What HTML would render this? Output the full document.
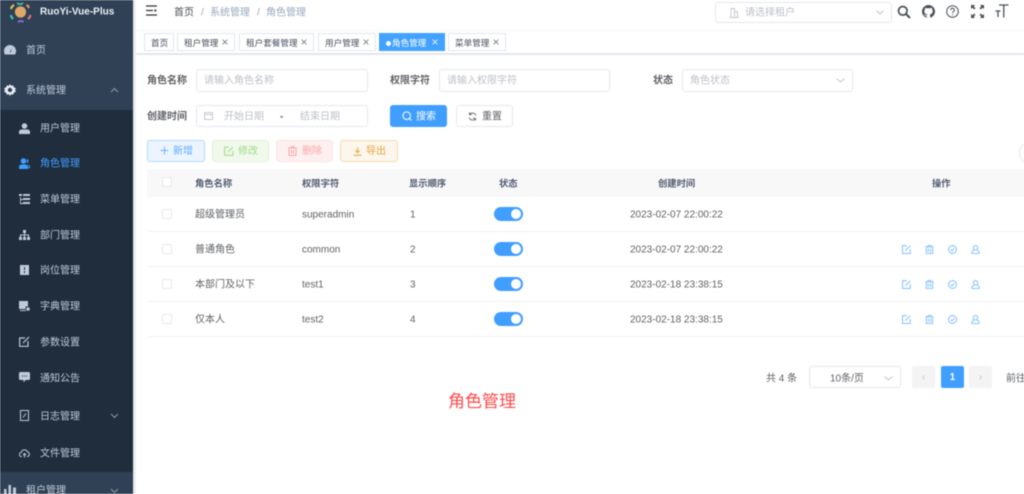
<!DOCTYPE html>
<html lang="zh"><head><meta charset="utf-8"><title>角色管理</title>
<style>
html,body{margin:0;padding:0;width:1024px;height:494px;overflow:hidden;background:#fff}
#r{position:relative;width:1024px;height:494px;overflow:hidden;font-family:"Liberation Sans","Noto Sans CJK SC",sans-serif;font-size:10px;color:#606266;filter:blur(.45px)}
.a,.t,.b,svg{position:absolute}
.t{white-space:nowrap;line-height:14px;transform:translateY(-5.5px)}
.b{box-sizing:border-box}
.side{color:#bfcbd9}
.in{background:#fff;border:1px solid #e4e7ed;border-radius:3px}
.ph{color:#bcc0c8}
.lb{font-weight:700;color:#606266}
.tag{position:absolute;top:33px;height:18px;box-sizing:border-box;border:1px solid #e2e6ee;background:#fff;color:#495060;font-size:8.6px;line-height:18px;white-space:nowrap;padding-left:6px}
.x{position:absolute;right:6px;top:5px;width:6px;height:6px}
.btn{position:absolute;top:140px;height:22px;box-sizing:border-box;border-radius:3px;border:1px solid;text-align:left;line-height:22px;font-size:10px;white-space:nowrap}
.th{color:#515a6e;font-weight:700;font-size:9.3px}
.cb{position:absolute;left:162px;width:10px;height:10px;box-sizing:border-box;border:1px solid #e6e8ec;border-radius:2px;background:#fff}
.sw{position:absolute;left:494px;width:29px;height:14px;background:#409eff;border-radius:7px}
.sw:after{content:"";position:absolute;right:2px;top:2px;width:10px;height:10px;border-radius:50%;background:#fff}
.ln{position:absolute;left:147px;right:0;height:1px;background:#eff2f6}
.pg{position:absolute;top:366px;height:22px;box-sizing:border-box;border-radius:2px;background:#f4f4f5;text-align:center;line-height:24px;color:#c0c4cc;font-size:10px}
svg.i{fill:none;stroke:#8cc5ff;stroke-width:1.2}
svg.s{fill:#bfcbd9}
svg.x path{stroke:#606a75;stroke-width:.9;fill:none}
</style></head><body><div id="r">

<!-- sidebar -->
<div class="b" style="left:0;top:0;width:133px;height:494px;background:#1f2d3d"></div>
<div class="b" style="left:0;top:0;width:133px;height:110px;background:#304156"></div>
<div class="b" style="left:0;top:472px;width:133px;height:22px;background:#304156"></div>
<div class="b" style="left:133px;top:0;width:3px;height:494px;background:linear-gradient(90deg,#dfe2e7,#f6f7f8)"></div>

<svg style="left:8px;top:0" width="26" height="24" viewBox="0 0 26 24">
<circle cx="12.5" cy="12" r="5.6" fill="#e0a868"/>
<path d="M9 3l3 1.500 3-1.500" stroke="#3fc5b0" stroke-width="1.8" fill="none"/>
<path d="M18.500 5q2 1 2.500 3" stroke="#e79a6b" stroke-width="2" fill="none"/>
<path d="M3 9q.5-2.500 3-4" stroke="#e8d24a" stroke-width="2" fill="none"/>
<path d="M3 15q0 2 2 4" stroke="#3fd0c0" stroke-width="2" fill="none"/>
<path d="M20 19q2-1.500 2.500-4" stroke="#e07a7a" stroke-width="2" fill="none"/>
<path d="M10 22q3-2 5.500 0" stroke="#8a68d8" stroke-width="2" fill="none"/>
</svg>
<div class="t" style="left:40px;top:10.500px;font-size:10px;font-weight:700;color:#eef1f5">RuoYi-Vue-Plus</div>

<svg class="s" style="left:4px;top:45px" width="12" height="10" viewBox="0 0 12 10"><path d="M6 0a6 6 0 0 0-6 6c0 1.500.3 2.500 1 3.500h10c.7-1 1-2 1-3.500a6 6 0 0 0-6-6zM6 7.500 7.500 3 7 7.500z"/></svg>
<div class="t side" style="left:26px;top:50px">首页</div>

<svg class="a" style="left:4px;top:84px" width="12" height="12" viewBox="0 0 12 12"><path d="M6 0l1 1.700 2-.3.9 1.800L12 4.500 11 6l1 1.500-2.100 1.300-.9 1.800-2-.3L6 12l-1-1.700-2 .3-.9-1.800L0 7.500 1 6 0 4.500l2.100-1.300.9-1.800 2 .3z" fill="#e9edf2"/><circle cx="6" cy="6" r="2.200" fill="#304156"/></svg>
<div class="t side" style="left:26px;top:90px">系统管理</div>
<svg style="left:110px;top:87px" width="9" height="6" viewBox="0 0 9 6"><path d="M1 5l3.500-3.500L8 5" stroke="#8f9cab" fill="none"/></svg>

<svg class="s" style="left:19px;top:123px" width="11" height="11" viewBox="0 0 11 11"><circle cx="5.500" cy="3" r="2.800"/><path d="M0 11V9q0-2.500 3-2.500h5q3 0 3 2.500v2z"/></svg>
<div class="t side" style="left:40px;top:128px">用户管理</div>

<svg style="left:19px;top:158px;fill:#409eff" width="11" height="11" viewBox="0 0 11 11"><circle cx="4.500" cy="3" r="2.800"/><path d="M0 11V9q0-2.500 3-2.500h3q3 0 3 2.500v2zM8 .8a2.500 2.500 0 0 1 0 4.600zM9 6.500q2 .5 2 2.500v1.500H9.800V9q0-1.500-.8-2.500z"/></svg>
<div class="t" style="left:40px;top:163px;color:#409eff">角色管理</div>

<svg class="s" style="left:19px;top:194px" width="11" height="10" viewBox="0 0 11 10"><path d="M0 0h3v2H0zM4 0h7v2H4zM4 4h7v2H4zM4 8h7v2H4zM0 3h1v7h3v-1H1.800V6H4V5H1.800V3z"/></svg>
<div class="t side" style="left:40px;top:199px">菜单管理</div>

<svg class="s" style="left:19px;top:230px" width="11" height="10" viewBox="0 0 11 10"><path d="M4 0h3v3H6v1.500h4V7h1v3H8V7h1V5.500H6V7h1v3H4V7h1V5.500H2V7h1v3H0V7h1V4.500h4V3H4z"/></svg>
<div class="t side" style="left:40px;top:235px">部门管理</div>

<svg class="s" style="left:20px;top:265px" width="9" height="10" viewBox="0 0 9 10"><path d="M0 0h9v10H0z"/><path d="M4 2h1v3H4zM4 6h1v2H4z" fill="#1f2d3d"/></svg>
<div class="t side" style="left:40px;top:270px">岗位管理</div>

<svg class="s" style="left:19px;top:301px" width="11" height="10" viewBox="0 0 11 10"><path d="M0 0h9v5.500H6.500V8H0zM1 9h6v1H1z"/><circle cx="9" cy="8" r="1.800"/></svg>
<div class="t side" style="left:40px;top:306px">字典管理</div>

<svg style="left:19px;top:336px" width="11" height="11" viewBox="0 0 11 11"><path d="M6 2H.7v8.300H9V5M4 7l6-6" stroke="#bfcbd9" stroke-width="1.200" fill="none"/></svg>
<div class="t side" style="left:40px;top:342px">参数设置</div>

<svg class="s" style="left:19px;top:372px" width="11" height="11" viewBox="0 0 11 11"><path d="M1.500 0h8Q11 0 11 1.500v5Q11 8 9.500 8H6.500L4.500 10.500V8h-3Q0 8 0 6.500v-5Q0 0 1.500 0z"/><path d="M3 3.500h1v1H3zM5 3.500h1v1H5zM7 3.500h1v1H7z" fill="#1f2d3d"/></svg>
<div class="t side" style="left:40px;top:378px">通知公告</div>

<svg style="left:20px;top:410px" width="9" height="11" viewBox="0 0 9 11"><path d="M.5.500h8v10h-8zM3 7.500l3-4" stroke="#bfcbd9" fill="none"/></svg>
<div class="t side" style="left:40px;top:415.500px">日志管理</div>
<svg style="left:110px;top:413px" width="9" height="6" viewBox="0 0 9 6"><path d="M1 1l3.500 3.500L8 1" stroke="#8f9cab" fill="none"/></svg>

<svg style="left:19px;top:449px" width="11" height="9" viewBox="0 0 11 9"><path d="M3 7.500H2.500a2 2 0 0 1-.3-4A3.300 3.300 0 0 1 8.500 3a2.300 2.300 0 0 1 0 4.500H8M4 6l1.500-1.500L7 6M5.500 5v3.500" stroke="#bfcbd9" fill="none"/></svg>
<div class="t side" style="left:40px;top:453px">文件管理</div>

<svg class="s" style="left:4px;top:485px" width="12" height="9" viewBox="0 0 12 9"><path d="M0 4h2.500v5H0zM4.500 0H7v9H4.500zM9 2.500h3V9H9z"/></svg>
<div class="t side" style="left:26px;top:490px">租户管理</div>
<svg style="left:110px;top:488px" width="9" height="6" viewBox="0 0 9 6"><path d="M1 1l3.500 3.500L8 1" stroke="#8f9cab" fill="none"/></svg>

<!-- navbar -->
<svg style="left:146px;top:5px" width="12" height="12" viewBox="0 0 12 12"><path d="M0 1h11M0 5.500h7M0 10h11" stroke="#303133" stroke-width="1.300" fill="none"/><path d="M8.500 4l2.500 1.500L8.500 7z" fill="#303133"/></svg>
<div class="t" style="left:174px;top:12px;color:#4a4f57">首页</div>
<div class="t" style="left:201px;top:12px;color:#9aa0a8">/</div>
<div class="t" style="left:210px;top:12px;color:#97a8be">系统管理</div>
<div class="t" style="left:257px;top:12px;color:#9aa0a8">/</div>
<div class="t" style="left:266px;top:12px;color:#97a8be">角色管理</div>

<div class="b in" style="left:715px;top:2px;width:177px;height:21px"></div>
<svg style="left:729px;top:7px" width="10" height="11" viewBox="0 0 10 11"><path d="M2 10.500V1.500h3.500v9M5.500 4.500H8.500v6M.5 10.500h9" stroke="#c4c8ce" fill="none"/></svg>
<div class="t ph" style="left:745px;top:12px">请选择租户</div>
<svg style="left:876px;top:10px" width="8" height="5" viewBox="0 0 8 5"><path d="M.5.500 4 4 7.500.5" stroke="#c0c4cc" fill="none"/></svg>

<svg style="left:897px;top:5px" width="14" height="14" viewBox="0 0 14 14"><circle cx="5.800" cy="5.800" r="4.300" stroke="#4b5058" stroke-width="1.700" fill="none"/><path d="M9 9l4 4" stroke="#4b5058" stroke-width="2" fill="none"/></svg>
<svg style="left:922px;top:5px" width="13" height="13" viewBox="0 0 16 16"><path fill="#4b5058" d="M8 0C3.580 0 0 3.580 0 8c0 3.540 2.290 6.530 5.470 7.590.4.070.55-.17.550-.38v-1.340c-2.230.48-2.690-1.070-2.690-1.070-.36-.92-.89-1.170-.89-1.170-.73-.5.050-.49.050-.49.800.06 1.230.83 1.230.83.710 1.220 1.870.870 2.330.660.070-.520.280-.870.510-1.070-1.780-.2-3.640-.89-3.640-3.950 0-.870.310-1.590.820-2.150-.08-.2-.360-1.020.080-2.120 0 0 .670-.210 2.200.820a7.600 7.600 0 0 1 4 0c1.530-1.040 2.200-.820 2.200-.820.440 1.100.160 1.920.080 2.120.510.560.820 1.270.820 2.150 0 3.070-1.870 3.750-3.650 3.950.290.250.540.730.540 1.480v2.200c0 .210.150.460.550.380A8 8 0 0 0 16 8c0-4.420-3.580-8-8-8z"/></svg>
<svg style="left:946px;top:5px" width="13" height="13" viewBox="0 0 13 13"><circle cx="6.500" cy="6.500" r="5.800" stroke="#4b5058" fill="none"/><path d="M4.700 5a1.800 1.800 0 1 1 2.600 1.700c-.6.300-.8.600-.8 1.300M6.500 9.200v1" stroke="#4b5058" fill="none"/></svg>
<svg style="left:971px;top:5px" width="13" height="13" viewBox="0 0 13 13"><path d="M0 0h4L2.800 1.500 4.500 3.200 3.200 4.500 1.500 2.800 0 4zM13 0v4l-1.500-1.200-1.700 1.700-1.300-1.300 1.700-1.700L9 0zM0 13V9l1.500 1.200 1.700-1.700 1.300 1.300-1.700 1.700L4 13zM13 13H9l1.200-1.500-1.700-1.700 1.300-1.300 1.700 1.700L13 9z" fill="#4b5058"/></svg>
<svg style="left:995px;top:4px" width="14" height="14" viewBox="0 0 14 14"><path d="M4 1h9.500M8.800 1v12.500M.5 7h5M3 7v6" stroke="#4b5058" stroke-width="1.300" fill="none"/></svg>

<!-- tags bar -->
<div class="b" style="left:136px;top:30px;right:0;height:1px;background:#f4f5f7"></div>
<div class="b" style="left:136px;top:53px;right:0;height:2px;background:#e3e6eb"></div>
<div class="tag" style="left:144px;width:30px">首页</div>
<div class="tag" style="left:177px;width:58px">租户管理<svg class="x" viewBox="0 0 7 7"><path d="M.7.700l5.600 5.600M6.300.700.7 6.300"/></svg></div>
<div class="tag" style="left:239px;width:75px">租户套餐管理<svg class="x" viewBox="0 0 7 7"><path d="M.7.700l5.600 5.600M6.300.700.7 6.300"/></svg></div>
<div class="tag" style="left:318px;width:58px">用户管理<svg class="x" viewBox="0 0 7 7"><path d="M.7.700l5.600 5.600M6.300.700.7 6.300"/></svg></div>
<div class="tag" style="left:379px;width:66px;background:#42a2ff;border-color:#42a2ff;color:#fff;padding-left:6px"><span style="display:inline-block;width:5px;height:5px;border-radius:50%;background:#fff;margin-right:1px;vertical-align:0"></span>角色管理<svg class="x" viewBox="0 0 7 7"><path style="stroke:#fff" d="M.7.700l5.600 5.600M6.300.700.7 6.300"/></svg></div>
<div class="tag" style="left:448px;width:58px">菜单管理<svg class="x" viewBox="0 0 7 7"><path d="M.7.700l5.600 5.600M6.300.700.7 6.300"/></svg></div>

<!-- form -->
<div class="t lb" style="left:147px;top:80px">角色名称</div>
<div class="b in" style="left:196px;top:69px;width:172px;height:23px"></div>
<div class="t ph" style="left:204px;top:80px">请输入角色名称</div>
<div class="t lb" style="left:390px;top:80px">权限字符</div>
<div class="b in" style="left:439px;top:69px;width:171px;height:23px"></div>
<div class="t ph" style="left:447px;top:80px">请输入权限字符</div>
<div class="t lb" style="left:653px;top:80px">状态</div>
<div class="b in" style="left:682px;top:69px;width:171px;height:23px"></div>
<div class="t ph" style="left:690px;top:80px">角色状态</div>
<svg style="left:836px;top:78px" width="9" height="5" viewBox="0 0 9 5"><path d="M.5.500 4.500 4 8.500.5" stroke="#c0c4cc" fill="none"/></svg>

<div class="t lb" style="left:147px;top:116px">创建时间</div>
<div class="b in" style="left:196px;top:105px;width:172px;height:22px"></div>
<svg style="left:204px;top:111px" width="9" height="9" viewBox="0 0 9 9"><path d="M.5 1.500h8v7h-8zM.5 3.500h8" stroke="#c4c8ce" fill="none"/></svg>
<div class="t ph" style="left:224px;top:116px">开始日期</div>
<div class="t" style="left:280px;top:116px;color:#606266;font-weight:700">-</div>
<div class="t ph" style="left:300px;top:116px">结束日期</div>

<div class="b" style="left:390px;top:105px;width:57px;height:22px;background:#409eff;border-radius:3px"></div>
<svg style="left:402px;top:111px" width="10" height="10" viewBox="0 0 10 10"><circle cx="4.700" cy="4.700" r="3.800" stroke="#fff" fill="none"/><path d="M7.500 7.500 9.500 9.500" stroke="#fff" fill="none"/></svg>
<div class="t" style="left:416px;top:116px;color:#fff">搜索</div>
<div class="b in" style="left:456px;top:105px;width:57px;height:22px"></div>
<svg style="left:468px;top:112px" width="9" height="9" viewBox="0 0 9 9"><path d="M8 3.500A3.700 3.700 0 0 0 1.500 2.500M1 5.500A3.700 3.700 0 0 0 7.500 6.500M1.500.5v2.200h2.200M7.500 8.500V6.300H5.300" stroke="#606266" stroke-width=".9" fill="none"/></svg>
<div class="t" style="left:482px;top:116px;color:#606266">重置</div>

<div class="btn" style="left:147px;width:58px;background:#ecf5ff;border-color:#b3d8ff;color:#5cabff;padding-left:25px">新增</div>
<svg style="left:160px;top:146px" width="9" height="9" viewBox="0 0 9 9"><path d="M4.500.5v8M.5 4.500h8" stroke="#6db3ff" fill="none"/></svg>
<div class="btn" style="left:212px;width:57px;background:#f0f9eb;border-color:#e1f3d8;color:#a4da89;padding-left:25px">修改</div>
<svg style="left:224px;top:146px" width="10" height="10" viewBox="0 0 10 10"><path d="M5 1H.7v8.300H9V5M4 6l5-5" stroke="#a4da89" fill="none"/></svg>
<div class="btn" style="left:276px;width:57px;background:#fef0f0;border-color:#fde2e2;color:#f9a7a7;padding-left:25px">删除</div>
<svg style="left:288px;top:146px" width="9" height="10" viewBox="0 0 9 10"><path d="M0 2h9M3 2V.5h3V2M1 2v7.500h7V2M3.500 4v4M5.500 4v4" stroke="#f9a7a7" fill="none"/></svg>
<div class="btn" style="left:340px;width:58px;background:#fdf6ec;border-color:#f5dab1;color:#e6a23c;padding-left:25px">导出</div>
<svg style="left:353px;top:147px" width="9" height="9" viewBox="0 0 9 9"><path d="M4.500.5v5M2.300 3.500l2.200 2.200 2.200-2.200M.5 8.300h8" stroke="#e6a23c" fill="none"/></svg>
<div class="b" style="left:1019px;top:141px;width:24px;height:24px;border:1px solid #e4e7ed;border-radius:50%"></div>

<!-- table -->
<div class="b" style="left:147px;top:169px;right:0;height:28px;background:#f8f8f9"></div>
<div class="cb" style="top:177px"></div>
<div class="t th" style="left:195px;top:182px">角色名称</div>
<div class="t th" style="left:302px;top:182px">权限字符</div>
<div class="t th" style="left:409px;top:182px">显示顺序</div>
<div class="t th" style="left:499px;top:182px">状态</div>
<div class="t th" style="left:658px;top:182px">创建时间</div>
<div class="t th" style="left:932px;top:182px">操作</div>

<div class="cb" style="top:209px"></div>
<div class="t" style="left:195px;top:214px">超级管理员</div>
<div class="t" style="left:302px;top:214px">superadmin</div>
<div class="t" style="left:410px;top:214px">1</div>
<div class="sw" style="top:207px"></div>
<div class="t" style="left:630px;top:214px">2023-02-07 22:00:22</div>
<div class="ln" style="top:231px"></div>

<div class="cb" style="top:244px"></div>
<div class="t" style="left:195px;top:249px">普通角色</div>
<div class="t" style="left:302px;top:249px">common</div>
<div class="t" style="left:410px;top:249px">2</div>
<div class="sw" style="top:242px"></div>
<div class="t" style="left:630px;top:249px">2023-02-07 22:00:22</div>
<div class="ln" style="top:266px"></div>

<div class="cb" style="top:279px"></div>
<div class="t" style="left:195px;top:284px">本部门及以下</div>
<div class="t" style="left:302px;top:284px">test1</div>
<div class="t" style="left:410px;top:284px">3</div>
<div class="sw" style="top:277px"></div>
<div class="t" style="left:630px;top:284px">2023-02-18 23:38:15</div>
<div class="ln" style="top:301px"></div>

<div class="cb" style="top:314px"></div>
<div class="t" style="left:195px;top:319px">仅本人</div>
<div class="t" style="left:302px;top:319px">test2</div>
<div class="t" style="left:410px;top:319px">4</div>
<div class="sw" style="top:312px"></div>
<div class="t" style="left:630px;top:319px">2023-02-18 23:38:15</div>
<div class="ln" style="top:336px"></div>

<!-- row actions -->
<svg class="i" style="left:902px;top:245px" width="9" height="9" viewBox="0 0 10 10"><path d="M5.500.8H.6v8.600h8.600V4.500M3.500 6.300 9.200.8"/></svg>
<svg class="i" style="left:925px;top:245px" width="9" height="9" viewBox="0 0 10 10"><path d="M.5 2h9M3.300 2V.5h3.400V2M1.500 2v7.500h7V2M3.800 4v3.800M6.200 4v3.800"/></svg>
<svg class="i" style="left:948px;top:245px" width="9" height="9" viewBox="0 0 10 10"><circle cx="5" cy="5" r="4.400"/><path d="M3 5l1.500 1.500L7 3.800"/></svg>
<svg class="i" style="left:971px;top:245px" width="9" height="9" viewBox="0 0 10 10"><circle cx="5" cy="3" r="2.400"/><path d="M.8 9.600Q1 6.200 3.500 5.800M9.200 9.600Q9 6.200 6.500 5.800M.8 9.500h8.400"/></svg>

<svg class="i" style="left:902px;top:280px" width="9" height="9" viewBox="0 0 10 10"><path d="M5.500.8H.6v8.600h8.600V4.500M3.500 6.300 9.200.8"/></svg>
<svg class="i" style="left:925px;top:280px" width="9" height="9" viewBox="0 0 10 10"><path d="M.5 2h9M3.300 2V.5h3.400V2M1.500 2v7.500h7V2M3.800 4v3.800M6.200 4v3.800"/></svg>
<svg class="i" style="left:948px;top:280px" width="9" height="9" viewBox="0 0 10 10"><circle cx="5" cy="5" r="4.400"/><path d="M3 5l1.500 1.500L7 3.800"/></svg>
<svg class="i" style="left:971px;top:280px" width="9" height="9" viewBox="0 0 10 10"><circle cx="5" cy="3" r="2.400"/><path d="M.8 9.600Q1 6.200 3.500 5.800M9.200 9.600Q9 6.200 6.500 5.800M.8 9.500h8.400"/></svg>

<svg class="i" style="left:902px;top:315px" width="9" height="9" viewBox="0 0 10 10"><path d="M5.500.8H.6v8.600h8.600V4.500M3.500 6.300 9.200.8"/></svg>
<svg class="i" style="left:925px;top:315px" width="9" height="9" viewBox="0 0 10 10"><path d="M.5 2h9M3.300 2V.5h3.400V2M1.500 2v7.500h7V2M3.800 4v3.800M6.200 4v3.800"/></svg>
<svg class="i" style="left:948px;top:315px" width="9" height="9" viewBox="0 0 10 10"><circle cx="5" cy="5" r="4.400"/><path d="M3 5l1.500 1.500L7 3.800"/></svg>
<svg class="i" style="left:971px;top:315px" width="9" height="9" viewBox="0 0 10 10"><circle cx="5" cy="3" r="2.400"/><path d="M.8 9.600Q1 6.200 3.500 5.800M9.200 9.600Q9 6.200 6.500 5.800M.8 9.500h8.400"/></svg>

<!-- pagination -->
<div class="t" style="left:766px;top:378px">共 4 条</div>
<div class="b in" style="left:809px;top:366px;width:92px;height:22px"></div>
<div class="t" style="left:830px;top:378px">10条/页</div>
<svg style="left:884px;top:376px" width="9" height="5" viewBox="0 0 9 5"><path d="M.5.500 4.500 4 8.500.5" stroke="#c0c4cc" fill="none"/></svg>
<div class="pg" style="left:912px;width:23px">‹</div>
<div class="pg" style="left:941px;width:23px;background:#409eff;color:#fff;font-weight:700">1</div>
<div class="pg" style="left:969px;width:23px">›</div>
<div class="t" style="left:1006px;top:378px">前往</div>

<div class="t" style="left:448px;top:400px;font-size:17px;line-height:20px;transform:translateY(-8px);color:#ff4a4a">角色管理</div>
</div></body></html>
